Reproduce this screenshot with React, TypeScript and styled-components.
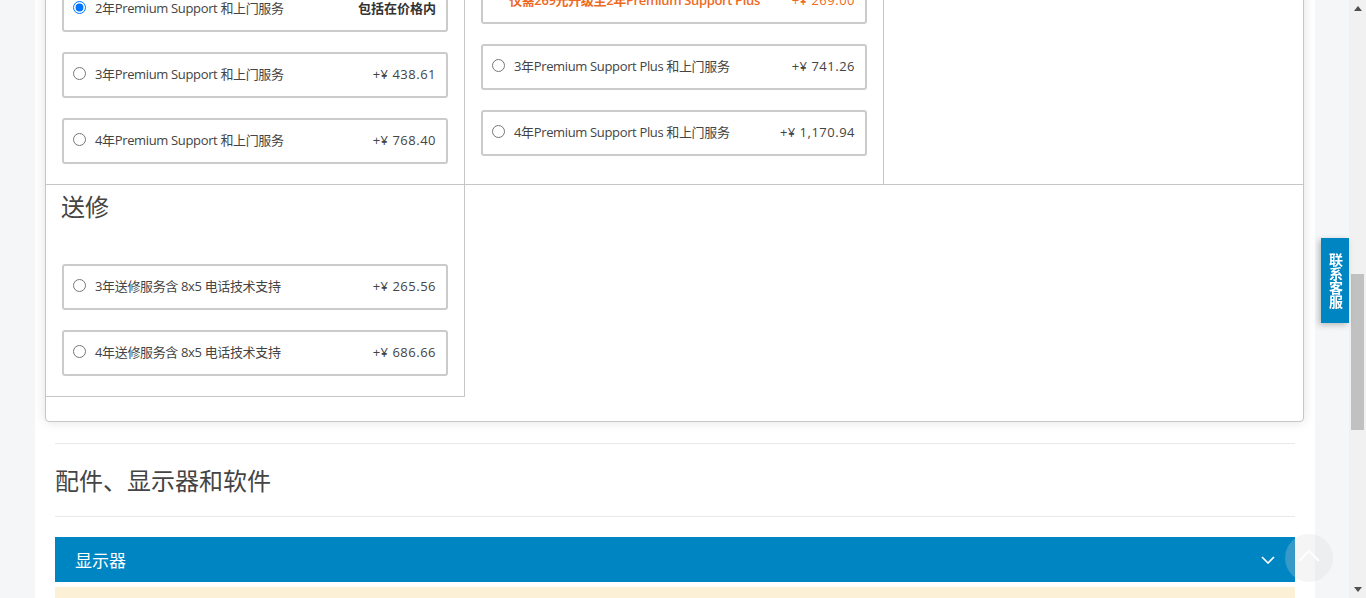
import React from 'react';
import styled, { createGlobalStyle } from 'styled-components';

const GlobalStyle = createGlobalStyle`
  html, body {
    margin: 0;
    padding: 0;
    overflow: hidden;
  }

  body {
    background: #f5f6f8;
    font-family: "Open Sans", "Noto Sans CJK SC", sans-serif;
    color: #444;
  }

  * {
    box-sizing: border-box;
  }
`;

interface IOption {
  id: string;
  label: string;
  price: string;
  checked?: boolean;
}

const supportList: IOption[] = [
  { id: 'ps2', label: '2年Premium Support 和上门服务', price: '包括在价格内', checked: true },
  { id: 'ps3', label: '3年Premium Support 和上门服务', price: '+¥ 438.61' },
  { id: 'ps4', label: '4年Premium Support 和上门服务', price: '+¥ 768.40' },
];

const plusList: IOption[] = [
  { id: 'pp3', label: '3年Premium Support Plus 和上门服务', price: '+¥ 741.26' },
  { id: 'pp4', label: '4年Premium Support Plus 和上门服务', price: '+¥ 1,170.94' },
];

const depotList: IOption[] = [
  { id: 'd3', label: '3年送修服务含 8x5 电话技术支持', price: '+¥ 265.56' },
  { id: 'd4', label: '4年送修服务含 8x5 电话技术支持', price: '+¥ 686.66' },
];

const OptionRow: React.FC<{ option: IOption; name: string }> = ({ option, name }) => (
  <OptionBox>
    <Radio name={name} checked={!!option.checked} readOnly />
    <OptionLabel>{option.label}</OptionLabel>
    <OptionPrice $bold={!!option.checked}>{option.price}</OptionPrice>
  </OptionBox>
);

const App: React.FC = () => (
  <>
    <GlobalStyle />
    <Viewport>
      <Gutter />
      <Content>
        <ServiceCard>
          <Cell $padTop={25}>
            <OptionList>
              {supportList.map((o) => (
                <OptionRow key={o.id} option={o} name="support" />
              ))}
            </OptionList>
          </Cell>
          <Cell $padTop={17}>
            <OptionList>
              <OptionBox>
                <UpsellText>仅需269元升级至2年Premium Support Plus</UpsellText>
                <UpsellPrice>+¥ 269.00</UpsellPrice>
              </OptionBox>
              {plusList.map((o) => (
                <OptionRow key={o.id} option={o} name="support" />
              ))}
            </OptionList>
          </Cell>
          <Cell $last />
          <Cell>
            <CellTitle>送修</CellTitle>
            <OptionList $top={43}>
              {depotList.map((o) => (
                <OptionRow key={o.id} option={o} name="depot" />
              ))}
            </OptionList>
          </Cell>
        </ServiceCard>

        <Divider $top={21} />
        <SectionTitle>配件、显示器和软件</SectionTitle>
        <Divider />

        <AccordionHeader>
          <span>显示器</span>
          <svg width="14" height="8" viewBox="0 0 14 8" fill="none">
            <polyline points="1,1 7,7 13,1" stroke="#fff" strokeWidth="1.6" />
          </svg>
        </AccordionHeader>
        <NoticeBar />
      </Content>
      <Gutter $grow />
      <Scrollbar>
        <ScrollArrow>
          <svg width="8" height="5" viewBox="0 0 8 5">
            <polygon points="0,5 4,0 8,5" fill="#505050" />
          </svg>
        </ScrollArrow>
        <ScrollTrack>
          <ScrollThumb />
        </ScrollTrack>
        <ScrollArrow>
          <svg width="8" height="5" viewBox="0 0 8 5">
            <polygon points="0,0 8,0 4,5" fill="#505050" />
          </svg>
        </ScrollArrow>
      </Scrollbar>
    </Viewport>

    <ContactTab>联系客服</ContactTab>
    <BackToTop>
      <svg width="22" height="12" viewBox="0 0 22 12" fill="none">
        <polyline points="1,11 11,1 21,11" stroke="rgba(255,255,255,0.9)" strokeWidth="2" />
      </svg>
    </BackToTop>
  </>
);

const Viewport = styled.div`
  display: flex;
  height: 598px;
  overflow: hidden;
`;

const Gutter = styled.div<{ $grow?: boolean }>`
  width: 35px;
  flex: ${({ $grow }) => ($grow ? '1' : '0 0 35px')};
  background: #f5f6f8;
`;

const Content = styled.div`
  flex: 0 0 1280px;
  background: #fff;
`;

const ServiceCard = styled.div`
  margin: -40px 11px 0 10px;
  display: grid;
  grid-template-columns: repeat(3, 1fr);
  align-items: stretch;
  border: 1px solid #c6c6c6;
  border-radius: 0 0 4px 4px;
  padding-bottom: 24px;
  background: #fff;
  box-shadow: 0 0 12px rgba(0, 0, 0, 0.12);
`;

const Cell = styled.div<{ $padTop?: number; $last?: boolean }>`
  padding: ${({ $padTop }) => $padTop ?? 0}px 16px 20px;
  border-right: ${({ $last }) => ($last ? 'none' : '1px solid #c6c6c6')};
  border-bottom: 1px solid #c6c6c6;
`;

const CellTitle = styled.h3`
  margin: 7px 0 0 -1px;
  font-size: 24px;
  line-height: 29px;
  font-weight: 400;
  color: #444;
`;

const OptionList = styled.div<{ $top?: number }>`
  display: flex;
  flex-direction: column;
  gap: 20px;
  margin-top: ${({ $top }) => $top ?? 0}px;
`;

const OptionBox = styled.div`
  display: flex;
  align-items: center;
  height: 46px;
  padding: 0 10px 3px 9px;
  border: 2px solid #cbcbcb;
  border-radius: 3px;
  font-size: 13px;
  color: #444;
`;

const Radio = styled.input.attrs({ type: 'radio' })`
  width: 13px;
  height: 13px;
  margin: 0 9px 0 0;
  flex-shrink: 0;
`;

const OptionLabel = styled.span`
  flex: 1;
  white-space: nowrap;
  letter-spacing: -0.35px;
`;

const OptionPrice = styled.span<{ $bold: boolean }>`
  white-space: nowrap;
  letter-spacing: ${({ $bold }) => ($bold ? '0' : '0.5px')};
  font-weight: ${({ $bold }) => ($bold ? 700 : 400)};
  color: ${({ $bold }) => ($bold ? '#333' : '#444')};
`;

const UpsellText = styled.span`
  flex: 1;
  padding-left: 17px;
  white-space: nowrap;
  letter-spacing: -0.35px;
  color: #ee6a1f;
  font-weight: 600;
`;

const UpsellPrice = styled.span`
  white-space: nowrap;
  letter-spacing: 0.5px;
  color: #ee6a1f;
`;

const Divider = styled.div<{ $top?: number }>`
  height: 1px;
  margin: ${({ $top }) => $top ?? 0}px 20px 0;
  background: #e9e9e9;
`;

const SectionTitle = styled.h2`
  margin: 0 20px;
  padding: 22px 0 20px;
  font-size: 24px;
  line-height: 30px;
  font-weight: 400;
  color: #444;
`;

const AccordionHeader = styled.div`
  display: flex;
  align-items: center;
  justify-content: space-between;
  height: 45px;
  margin: 20px 20px 0;
  padding: 0 20px;
  background: #0085c3;
  color: #fff;
  font-size: 17px;
`;

const NoticeBar = styled.div`
  height: 20px;
  margin: 5px 20px 0;
  background: #fcf0d6;
`;

const Scrollbar = styled.div`
  flex: 0 0 17px;
  display: flex;
  flex-direction: column;
  background: #f1f1f1;
`;

const ScrollArrow = styled.div`
  height: 17px;
  display: flex;
  align-items: center;
  justify-content: center;
`;

const ScrollTrack = styled.div`
  flex: 1;
`;

const ScrollThumb = styled.div`
  height: 156px;
  margin: 257px 2px 0;
  background: #c1c1c1;
`;

const ContactTab = styled.div`
  position: fixed;
  top: 238px;
  right: 17px;
  width: 28px;
  height: 85px;
  display: flex;
  align-items: center;
  justify-content: center;
  writing-mode: vertical-rl;
  background: #0085c3;
  color: #fff;
  font-size: 14px;
  font-weight: 700;
  box-shadow: -2px 2px 6px rgba(0, 0, 0, 0.25);
`;

const BackToTop = styled.div`
  position: fixed;
  right: 33px;
  bottom: 16px;
  width: 48px;
  height: 48px;
  border-radius: 50%;
  display: flex;
  align-items: center;
  justify-content: center;
  padding-bottom: 4px;
  background: rgba(215, 215, 215, 0.25);
`;

export default App;
